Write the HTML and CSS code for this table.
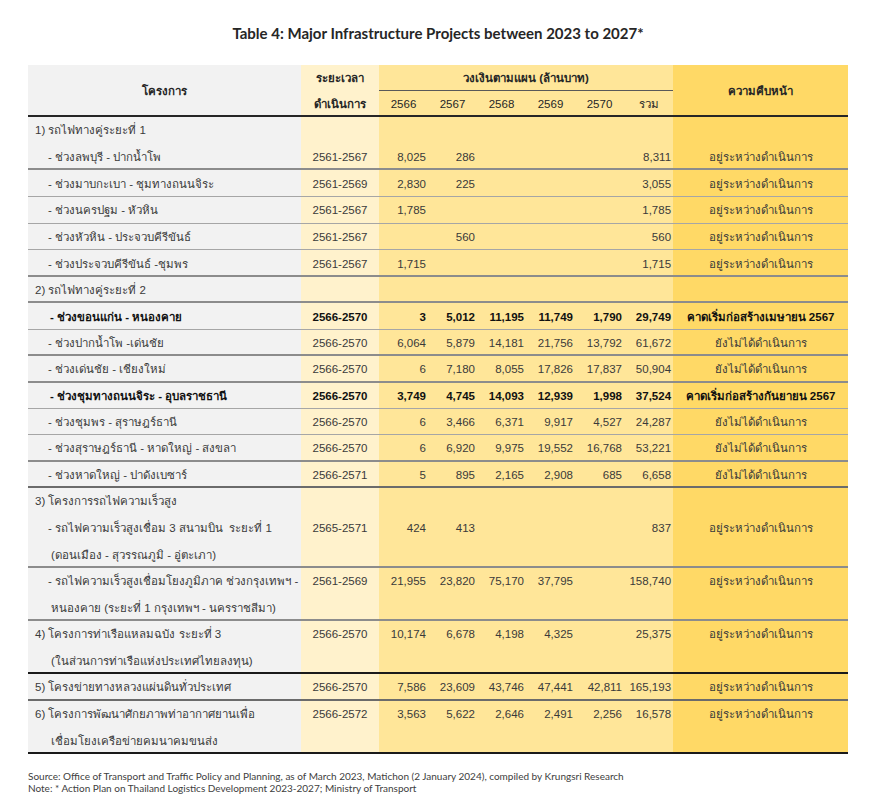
FILE: index.html
```html
<!DOCTYPE html>
<html lang="th">
<head>
<meta charset="utf-8">
<title>Table 4</title>
<link rel="stylesheet" href="styles.css">
</head>
<body>
<div class="page">
  <h1 class="title">Table 4: Major Infrastructure Projects between 2023 to 2027*</h1>
  <table class="tbl">
    <colgroup>
      <col class="c-proj"><col class="c-dur">
      <col class="c-yr"><col class="c-yr"><col class="c-yr"><col class="c-yr"><col class="c-yr"><col class="c-yr">
      <col class="c-prog">
    </colgroup>
    <thead>
      <tr class="h1">
        <th rowspan="2" class="proj hproj">โครงการ</th>
        <th class="dur">ระยะเวลา</th>
        <th colspan="6" class="bud hbud">วงเงินตามแผน (ล้านบาท)</th>
        <th rowspan="2" class="prog hprog">ความคืบหน้า</th>
      </tr>
      <tr class="h2">
        <th class="dur">ดำเนินการ</th>
        <th class="bud">2566</th><th class="bud">2567</th><th class="bud">2568</th><th class="bud">2569</th><th class="bud">2570</th><th class="bud">รวม</th>
      </tr>
    </thead>
    <tbody>
      <tr><td class="proj l1">1) รถไฟทางคู่ระยะที่ 1</td><td class="dur"></td><td class="bud"></td><td class="bud"></td><td class="bud"></td><td class="bud"></td><td class="bud"></td><td class="bud"></td><td class="prog"></td></tr>
      <tr class="b-mid"><td class="proj l2">- ช่วงลพบุรี - ปากน้ำโพ</td><td class="dur">2561-2567</td><td class="bud">8,025</td><td class="bud">286</td><td class="bud"></td><td class="bud"></td><td class="bud"></td><td class="bud">8,311</td><td class="prog">อยู่ระหว่างดำเนินการ</td></tr>
      <tr class="b-thin"><td class="proj l2">- ช่วงมาบกะเบา - ชุมทางถนนจิระ</td><td class="dur">2561-2569</td><td class="bud">2,830</td><td class="bud">225</td><td class="bud"></td><td class="bud"></td><td class="bud"></td><td class="bud">3,055</td><td class="prog">อยู่ระหว่างดำเนินการ</td></tr>
      <tr class="b-thin"><td class="proj l2">- ช่วงนครปฐม - หัวหิน</td><td class="dur">2561-2567</td><td class="bud">1,785</td><td class="bud"></td><td class="bud"></td><td class="bud"></td><td class="bud"></td><td class="bud">1,785</td><td class="prog">อยู่ระหว่างดำเนินการ</td></tr>
      <tr class="b-thin"><td class="proj l2">- ช่วงหัวหิน - ประจวบคีรีขันธ์</td><td class="dur">2561-2567</td><td class="bud"></td><td class="bud">560</td><td class="bud"></td><td class="bud"></td><td class="bud"></td><td class="bud">560</td><td class="prog">อยู่ระหว่างดำเนินการ</td></tr>
      <tr class="b-mid"><td class="proj l2">- ช่วงประจวบคีรีขันธ์ -ชุมพร</td><td class="dur">2561-2567</td><td class="bud">1,715</td><td class="bud"></td><td class="bud"></td><td class="bud"></td><td class="bud"></td><td class="bud">1,715</td><td class="prog">อยู่ระหว่างดำเนินการ</td></tr>

      <tr class="s2 b-mid"><td class="proj l1">2) รถไฟทางคู่ระยะที่ 2</td><td class="dur"></td><td class="bud"></td><td class="bud"></td><td class="bud"></td><td class="bud"></td><td class="bud"></td><td class="bud"></td><td class="prog"></td></tr>
      <tr class="s2 b-thin bold"><td class="proj l3">- ช่วงขอนแก่น - หนองคาย</td><td class="dur">2566-2570</td><td class="bud">3</td><td class="bud">5,012</td><td class="bud">11,195</td><td class="bud">11,749</td><td class="bud">1,790</td><td class="bud">29,749</td><td class="prog">คาดเริ่มก่อสร้างเมษายน 2567</td></tr>
      <tr class="s2 b-mid"><td class="proj l2">- ช่วงปากน้ำโพ -เด่นชัย</td><td class="dur">2566-2570</td><td class="bud">6,064</td><td class="bud">5,879</td><td class="bud">14,181</td><td class="bud">21,756</td><td class="bud">13,792</td><td class="bud">61,672</td><td class="prog">ยังไม่ได้ดำเนินการ</td></tr>
      <tr class="s2 b-mid"><td class="proj l2">- ช่วงเด่นชัย - เชียงใหม่</td><td class="dur">2566-2570</td><td class="bud">6</td><td class="bud">7,180</td><td class="bud">8,055</td><td class="bud">17,826</td><td class="bud">17,837</td><td class="bud">50,904</td><td class="prog">ยังไม่ได้ดำเนินการ</td></tr>
      <tr class="s2 b-thin bold"><td class="proj l3">- ช่วงชุมทางถนนจิระ - อุบลราชธานี</td><td class="dur">2566-2570</td><td class="bud">3,749</td><td class="bud">4,745</td><td class="bud">14,093</td><td class="bud">12,939</td><td class="bud">1,998</td><td class="bud">37,524</td><td class="prog">คาดเริ่มก่อสร้างกันยายน 2567</td></tr>
      <tr class="s2 b-thin"><td class="proj l2">- ช่วงชุมพร - สุราษฎร์ธานี</td><td class="dur">2566-2570</td><td class="bud">6</td><td class="bud">3,466</td><td class="bud">6,371</td><td class="bud">9,917</td><td class="bud">4,527</td><td class="bud">24,287</td><td class="prog">ยังไม่ได้ดำเนินการ</td></tr>
      <tr class="s2 b-mid"><td class="proj l2">- ช่วงสุราษฎร์ธานี - หาดใหญ่ - สงขลา</td><td class="dur">2566-2570</td><td class="bud">6</td><td class="bud">6,920</td><td class="bud">9,975</td><td class="bud">19,552</td><td class="bud">16,768</td><td class="bud">53,221</td><td class="prog">ยังไม่ได้ดำเนินการ</td></tr>
      <tr class="s2 b-dark"><td class="proj l2">- ช่วงหาดใหญ่ - ปาดังเบซาร์</td><td class="dur">2566-2571</td><td class="bud">5</td><td class="bud">895</td><td class="bud">2,165</td><td class="bud">2,908</td><td class="bud">685</td><td class="bud">6,658</td><td class="prog">ยังไม่ได้ดำเนินการ</td></tr>

      <tr><td class="proj l1">3) โครงการรถไฟความเร็วสูง</td><td class="dur"></td><td class="bud"></td><td class="bud"></td><td class="bud"></td><td class="bud"></td><td class="bud"></td><td class="bud"></td><td class="prog"></td></tr>
      <tr><td class="proj l2">- รถไฟความเร็วสูงเชื่อม 3 สนามบิน &nbsp;ระยะที่ 1</td><td class="dur">2565-2571</td><td class="bud">424</td><td class="bud">413</td><td class="bud"></td><td class="bud"></td><td class="bud"></td><td class="bud">837</td><td class="prog">อยู่ระหว่างดำเนินการ</td></tr>
      <tr class="b-mid"><td class="proj l4">(ดอนเมือง - สุวรรณภูมิ - อู่ตะเภา)</td><td class="dur"></td><td class="bud"></td><td class="bud"></td><td class="bud"></td><td class="bud"></td><td class="bud"></td><td class="bud"></td><td class="prog"></td></tr>
      <tr><td class="proj l2">- รถไฟความเร็วสูงเชื่อมโยงภูมิภาค ช่วงกรุงเทพฯ -</td><td class="dur">2561-2569</td><td class="bud">21,955</td><td class="bud">23,820</td><td class="bud">75,170</td><td class="bud">37,795</td><td class="bud"></td><td class="bud">158,740</td><td class="prog">อยู่ระหว่างดำเนินการ</td></tr>
      <tr class="short b-mid"><td class="proj l4">หนองคาย (ระยะที่ 1 กรุงเทพฯ - นครราชสีมา)</td><td class="dur"></td><td class="bud"></td><td class="bud"></td><td class="bud"></td><td class="bud"></td><td class="bud"></td><td class="bud"></td><td class="prog"></td></tr>

      <tr><td class="proj l1">4) โครงการท่าเรือแหลมฉบัง ระยะที่ 3</td><td class="dur">2566-2570</td><td class="bud">10,174</td><td class="bud">6,678</td><td class="bud">4,198</td><td class="bud">4,325</td><td class="bud"></td><td class="bud">25,375</td><td class="prog">อยู่ระหว่างดำเนินการ</td></tr>
      <tr class="b-black"><td class="proj l4">(ในส่วนการท่าเรือแห่งประเทศไทยลงทุน)</td><td class="dur"></td><td class="bud"></td><td class="bud"></td><td class="bud"></td><td class="bud"></td><td class="bud"></td><td class="bud"></td><td class="prog"></td></tr>
      <tr class="b-dark"><td class="proj l1">5) โครงข่ายทางหลวงแผ่นดินทั่วประเทศ</td><td class="dur">2566-2570</td><td class="bud">7,586</td><td class="bud">23,609</td><td class="bud">43,746</td><td class="bud">47,441</td><td class="bud">42,811</td><td class="bud">165,193</td><td class="prog">อยู่ระหว่างดำเนินการ</td></tr>
      <tr><td class="proj l1">6) โครงการพัฒนาศักยภาพท่าอากาศยานเพื่อ</td><td class="dur">2566-2572</td><td class="bud">3,563</td><td class="bud">5,622</td><td class="bud">2,646</td><td class="bud">2,491</td><td class="bud">2,256</td><td class="bud">16,578</td><td class="prog">อยู่ระหว่างดำเนินการ</td></tr>
      <tr class="b-black"><td class="proj l4">เชื่อมโยงเครือข่ายคมนาคมขนส่ง</td><td class="dur"></td><td class="bud"></td><td class="bud"></td><td class="bud"></td><td class="bud"></td><td class="bud"></td><td class="bud"></td><td class="prog"></td></tr>
    </tbody>
  </table>
  <div class="notes">
    <p>Source: Office of Transport and Traffic Policy and Planning, as of March 2023, Matichon (2 January 2024), compiled by Krungsri Research</p>
    <p>Note: * Action Plan on Thailand Logistics Development 2023-2027; Ministry of Transport</p>
  </div>
</div>
</body>
</html>
```

FILE: styles.css
```css
html, body {
  margin: 0;
  padding: 0;
  background: #ffffff;
}

.page {
  width: 820px;
  padding: 0 0 0 28px;
}

.title {
  margin: 24px 0 0 0;
  height: 41px;
  font-family: Lato, "Liberation Sans", sans-serif;
  font-weight: 700;
  font-size: 15px;
  line-height: 18px;
  color: #262626;
  text-align: center;
}

.tbl {
  width: 820px;
  border-collapse: collapse;
  border-spacing: 0;
  table-layout: fixed;
  font-family: "Liberation Sans", Arial, sans-serif;
  font-size: 11.5px;
  color: #3a3a3a;
}

.c-proj { width: 273px; }
.c-dur { width: 78px; }
.c-yr { width: 49px; }
.c-prog { width: 175px; }

.tbl th,
.tbl td {
  padding: 0;
  height: 26.67px;
  line-height: 26px;
  white-space: nowrap;
  overflow: visible;
  vertical-align: middle;
}

.tbl th {
  font-weight: 700;
  color: #262626;
  height: 26px;
}

.proj { background: #f2f2f2; text-align: left; }
.dur { background: #fff2cc; text-align: center; }
.bud { background: #ffe699; text-align: right; padding-right: 2px !important; }
.prog { background: #ffd966; text-align: center; }

.tbl th.bud { text-align: center; padding-right: 0 !important; font-weight: 400; color: #262626; }
.tbl th.hbud { font-weight: 700; box-shadow: inset 0 -1px 0 #595959; }
.tbl th.hproj, .tbl th.hprog { text-align: center; }

.tbl thead tr.h2 th,
.tbl thead tr.h1 th.hproj,
.tbl thead tr.h1 th.hprog {
  box-shadow: inset 0 -2px 0 #262626;
}

.l1 { padding-left: 7px !important; }
.l2 { padding-left: 20px !important; }
.l3 { padding-left: 22px !important; }
.l4 { padding-left: 23px !important; }

.s2 td { height: 26.4px; }

tr.short td { height: 21px; vertical-align: top; }

.bold td { font-weight: 700; color: #111111; }

.b-thin td { box-shadow: inset 0 -1px 0 #a6a6a6; }
.b-mid td { box-shadow: inset 0 -2px 0 #8c8c8c; }
.b-dark td { box-shadow: inset 0 -2px 0 #6b6b6b; }
.b-black td { box-shadow: inset 0 -2px 0 #1a1a1a; }

.notes {
  margin-top: 16px;
  font-family: Lato, "Liberation Sans", sans-serif;
  font-size: 10px;
  line-height: 12px;
  color: #404040;
}

.notes p {
  margin: 0;
}
```
